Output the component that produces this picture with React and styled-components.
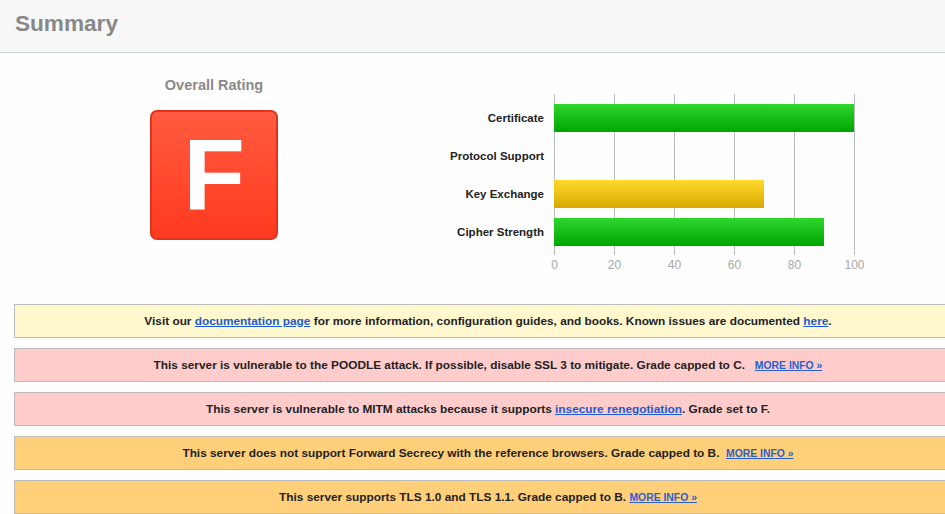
import React from "react";
import styled, { createGlobalStyle } from "styled-components";

const Global = createGlobalStyle`
  html, body { margin: 0; padding: 0; background: #fefefe; overflow: hidden; }
  body { font-family: "Liberation Sans", Arial, sans-serif; }
`;

const Page = styled.div`
  width: 980px;
`;

const Header = styled.div`
  height: 52px;
  background: #f7f7f7;
  border-bottom: 1px solid #c8d0d0;
  display: flex;
  align-items: center;
  padding-left: 15px;
`;

const Title = styled.h1`
  margin: 0 0 4px 0;
  font-size: 22.6px;
  font-weight: bold;
  color: #888;
`;

const Overview = styled.div`
  display: flex;
  height: 250px;
`;

const RatingColumn = styled.div`
  width: 428px;
  display: flex;
  flex-direction: column;
  align-items: center;
  padding-top: 24px;
`;

const RatingLabel = styled.div`
  font-size: 14.5px;
  font-weight: bold;
  color: #8a8a8a;
  line-height: 16px;
`;

const GradeBox = styled.div`
  margin-top: 17px;
  width: 124px;
  height: 124px;
  border: 2px solid #e3321c;
  border-radius: 7px;
  background: linear-gradient(#ff5b40, #ff3a1f);
  color: #fff;
  font-size: 101px;
  font-weight: bold;
  display: flex;
  align-items: center;
  justify-content: center;
  line-height: 1;
  padding-bottom: 2px;
  box-sizing: content-box;
`;

const ChartSvg = styled.svg`
  margin-top: 37px;
  display: block;
  font-family: "Liberation Sans", Arial, sans-serif;
`;

const Messages = styled.div`
  display: flex;
  flex-direction: column;
  gap: 10px;
  padding-left: 14px;
  margin-top: 1px;
`;

const tones = {
  info: "#fff8cf",
  error: "#ffcccc",
  warning: "#ffcf7a",
};

const MessageBox = styled.div`
  width: 946px;
  height: 32px;
  border: 1px solid #bcbcbc;
  background: ${(p) => tones[p.$tone]};
  display: flex;
  align-items: center;
  justify-content: center;
  font-size: 11.83px;
  font-weight: bold;
  color: #222;
  white-space: pre;
`;

const Link = styled.a`
  color: #1c5bd3;
  text-decoration: underline;
`;

const MoreInfo = styled.a`
  color: #2a5fd0;
  font-size: 10.4px;
  text-decoration: underline;
`;

const rows = [
  { label: "Certificate", value: 100, tone: "green" },
  { label: "Protocol Support", value: 0, tone: "green" },
  { label: "Key Exchange", value: 70, tone: "yellow" },
  { label: "Cipher Strength", value: 90, tone: "green" },
];

function Chart() {
  const x0 = 126;
  const scale = 3;
  return (
    <ChartSvg width="460" height="200" viewBox="0 0 460 200">
      <defs>
        <linearGradient id="gGreen" x1="0" y1="0" x2="0" y2="1">
          <stop offset="0" stopColor="#2ed62e" />
          <stop offset="1" stopColor="#00a600" />
        </linearGradient>
        <linearGradient id="gYellow" x1="0" y1="0" x2="0" y2="1">
          <stop offset="0" stopColor="#ffd92c" />
          <stop offset="1" stopColor="#d8a900" />
        </linearGradient>
      </defs>
      {[0, 20, 40, 60, 80, 100].map((t) => (
        <g key={t}>
          <line
            x1={x0 + t * scale + 0.5}
            x2={x0 + t * scale + 0.5}
            y1="4"
            y2="165"
            stroke="#bbbbbb"
            strokeWidth="1"
          />
          <text
            x={x0 + t * scale + 0.5}
            y="179"
            textAnchor="middle"
            fontSize="12"
            fill="#a8a8a8"
          >
            {t}
          </text>
        </g>
      ))}
      {rows.map((r, i) => {
        const cy = 28 + i * 38;
        return (
          <g key={r.label}>
            <text
              x="116"
              y={cy + 4}
              textAnchor="end"
              fontSize="11.5"
              fontWeight="bold"
              fill="#222"
            >
              {r.label}
            </text>
            {r.value > 0 && (
              <rect
                x={x0}
                y={cy - 14}
                width={r.value * scale}
                height="28"
                fill={r.tone === "green" ? "url(#gGreen)" : "url(#gYellow)"}
              />
            )}
          </g>
        );
      })}
    </ChartSvg>
  );
}

export default function App() {
  return (
    <Page>
      <Global />
      <Header>
        <Title>Summary</Title>
      </Header>
      <Overview>
        <RatingColumn>
          <RatingLabel>Overall Rating</RatingLabel>
          <GradeBox>F</GradeBox>
        </RatingColumn>
        <Chart />
      </Overview>
      <Messages>
        <MessageBox $tone="info">
          Visit our <Link href="#">documentation page</Link> for more information, configuration guides, and books. Known issues are documented <Link href="#">here</Link>.
        </MessageBox>
        <MessageBox $tone="error">
          This server is vulnerable to the POODLE attack. If possible, disable SSL 3 to mitigate. Grade capped to C.{"   "}
          <MoreInfo href="#">MORE INFO »</MoreInfo>
        </MessageBox>
        <MessageBox $tone="error">
          This server is vulnerable to MITM attacks because it supports <Link href="#">insecure renegotiation</Link>. Grade set to F.
        </MessageBox>
        <MessageBox $tone="warning">
          This server does not support Forward Secrecy with the reference browsers. Grade capped to B.{"  "}
          <MoreInfo href="#">MORE INFO »</MoreInfo>
        </MessageBox>
        <MessageBox $tone="warning">
          This server supports TLS 1.0 and TLS 1.1. Grade capped to B. <MoreInfo href="#">MORE INFO »</MoreInfo>
        </MessageBox>
      </Messages>
    </Page>
  );
}
